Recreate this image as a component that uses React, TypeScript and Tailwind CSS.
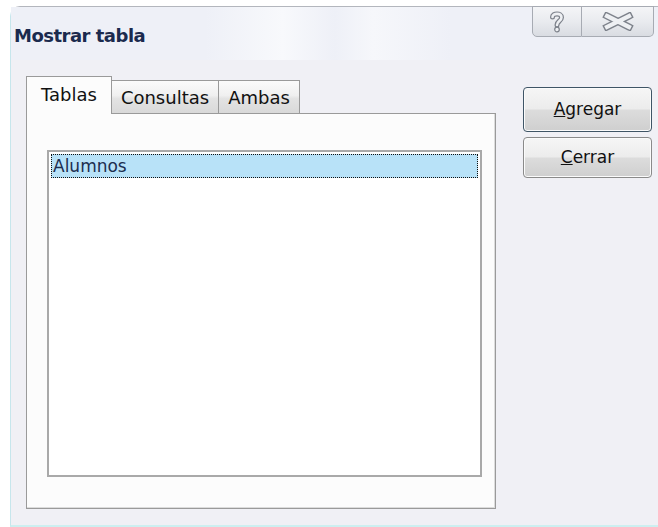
import type { ReactNode } from 'react';

const font = 'font-["DejaVu_Sans",Verdana,sans-serif]';

function HelpGlyph() {
  return (
    <svg width="16" height="22" viewBox="0 0 16 22" aria-hidden="true">
      <g fill="none" strokeLinecap="round" strokeLinejoin="round">
        <path d="M3.5 6 C3.5 2 12.5 1.5 12.5 6.5 C12.5 10 8 10 8 14" stroke="#7d828b" strokeWidth="5" />
        <path d="M3.5 6 C3.5 2 12.5 1.5 12.5 6.5 C12.5 10 8 10 8 14" stroke="#eef0f3" strokeWidth="2.6" />
        <circle cx="8" cy="18.5" r="2.3" fill="#eef0f3" stroke="#7d828b" strokeWidth="1.2" />
      </g>
    </svg>
  );
}

function CloseGlyph() {
  return (
    <svg width="32" height="19" viewBox="0 0 32 19" aria-hidden="true">
      <g fill="none" strokeLinecap="square">
        <path d="M5 4 L27 15 M27 4 L5 15" stroke="#7d828b" strokeWidth="7" />
        <path d="M5 4 L27 15 M27 4 L5 15" stroke="#eef0f3" strokeWidth="4.2" />
      </g>
    </svg>
  );
}

function Tab({ label, active, width }: { label: string; active?: boolean; width: string }) {
  return (
    <div
      className={`${width} flex items-center justify-center border border-b-0 border-[#9a9a9a] text-[18px] text-[#111] ${
        active
          ? 'h-[38px] -mb-px bg-[#fcfcfc] relative z-10 pb-[2px]'
          : 'h-[33px] bg-[linear-gradient(#fbfbfb_0%,#f0f0f0_45%,#e3e3e3_55%,#d9d9d9_100%)] -ml-px pt-[1px]'
      }`}
    >
      {label}
    </div>
  );
}

function DialogButton({ children, isDefault, height }: { children: ReactNode; isDefault?: boolean; height: string }) {
  return (
    <button
      className={`${height} w-[129px] rounded-[4px] border text-[17px] text-[#111] bg-[linear-gradient(#f6f6f6_0%,#ececec_48%,#dcdcdc_52%,#cfcfcf_100%)] shadow-[inset_0_0_0_1px_#fbfbfb] ${
        isDefault ? 'border-[#3f5566]' : 'border-[#8a8a8a]'
      }`}
    >
      {children}
    </button>
  );
}

export default function App() {
  return (
    <div className={`w-[658px] h-[527px] bg-white pl-[10px] pt-[6px] overflow-hidden ${font}`}>
      <div className="h-full flex flex-col border-l border-t border-b-2 border-t-[#b3b6bd] border-l-[#c6e6ec] border-b-[#cdeff0] rounded-tl-[10px] bg-[#f0f0f5]">
        {/* caption */}
        <div className="h-[53px] flex justify-between bg-[linear-gradient(90deg,#eef0f7_0%,#eef0f7_30%,#f8f9fc_42%,#eef0f7_50%,#f6f7fb_56%,#eef0f7_68%)]">
          <div className="pl-[3px] pt-[15px] text-[18px] font-bold text-[#1b2a4e] tracking-[-0.5px]">Mostrar tabla</div>
          <div className="flex -mt-px mr-[4px] h-[31px]">
            <div className="w-[50px] flex items-center justify-center border border-[#a7abb3] rounded-bl-[5px] bg-[linear-gradient(#f4f5f7_0%,#e9ebef_50%,#d9dce2_100%)]">
              <HelpGlyph />
            </div>
            <div className="w-[72px] flex items-center justify-center border border-l-0 border-[#a7abb3] rounded-br-[5px] bg-[linear-gradient(#f4f5f7_0%,#e9ebef_50%,#d9dce2_100%)]">
              <CloseGlyph />
            </div>
          </div>
        </div>

        {/* body */}
        <div className="flex pl-[15px] pt-[16px]">
          <div className="w-[470px] flex flex-col">
            <div className="flex items-end h-[37px]">
              <Tab label="Tablas" active width="w-[86px]" />
              <Tab label="Consultas" width="w-[108px]" />
              <Tab label="Ambas" width="w-[82px]" />
            </div>
            <div className="h-[396px] border border-[#9a9a9a] bg-[#fcfcfc] shadow-[inset_-1px_-1px_0_#dcdcdc] pl-[20px] pr-[13px] pt-[36px] pb-[31px]">
              <div className="h-full border-2 border-[#a9a9a9] bg-white p-[2px]">
                <div className="h-[24px] bg-[#b8e2f8] border border-dotted border-[#111] flex items-center pl-[1px] text-[17px] text-[#1c2e50] leading-none">
                  Alumnos
                </div>
              </div>
            </div>
          </div>

          <div className="flex flex-col gap-[5px] ml-[27px] pt-[11px]">
            <DialogButton isDefault height="h-[45px]">
              <span className="underline">A</span>gregar
            </DialogButton>
            <DialogButton height="h-[41px]">
              <span className="underline">C</span>errar
            </DialogButton>
          </div>
        </div>
      </div>
    </div>
  );
}
